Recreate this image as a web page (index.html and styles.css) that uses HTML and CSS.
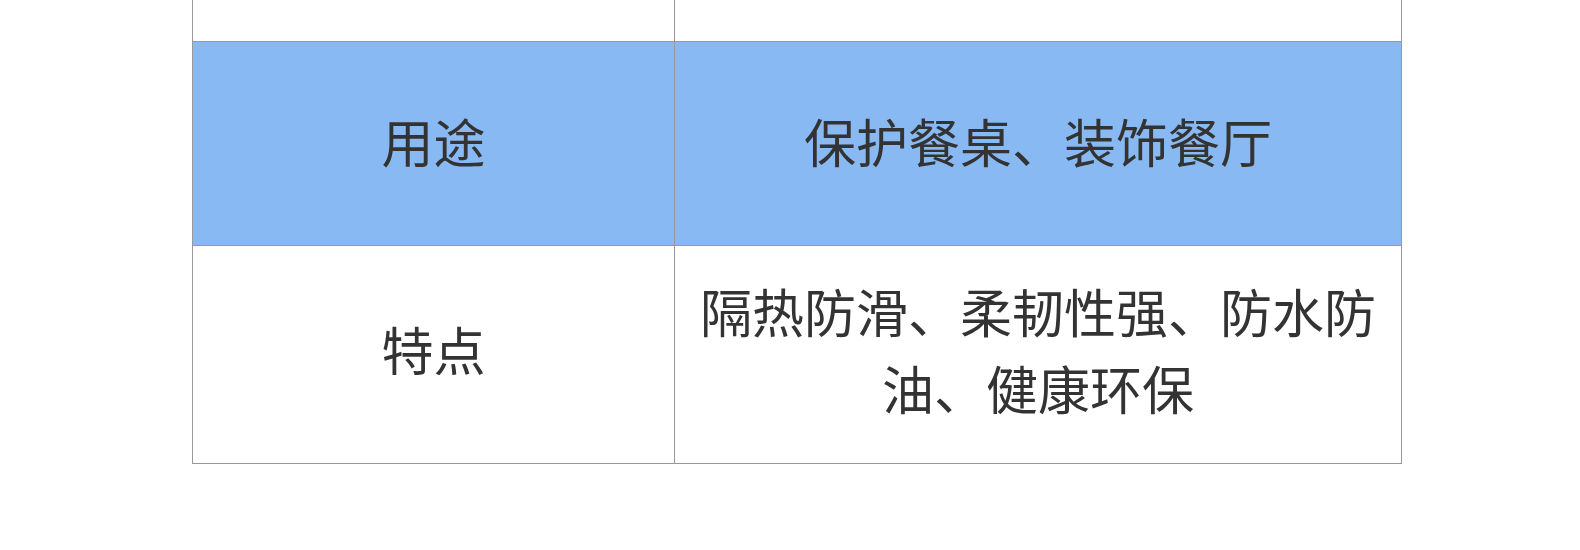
FILE: index.html
```html
<!DOCTYPE html>
<html lang="zh-CN">
<head>
<meta charset="utf-8">
<title>餐桌垫</title>
<link rel="stylesheet" href="styles.css">
</head>
<body>
<table class="spec">
  <colgroup>
    <col class="col-label">
    <col class="col-value">
  </colgroup>
  <tbody>
    <tr class="row-top">
      <td></td>
      <td></td>
    </tr>
    <tr class="row-use">
      <td>用途</td>
      <td>保护餐桌、装饰餐厅</td>
    </tr>
    <tr class="row-feature">
      <td>特点</td>
      <td>隔热防滑、柔韧性强、防水防油、健康环保</td>
    </tr>
  </tbody>
</table>
</body>
</html>
```

FILE: styles.css
```css
html, body {
  margin: 0;
  padding: 0;
  background: #ffffff;
}

body {
  width: 1580px;
  height: 550px;
  overflow: hidden;
  font-family: "Noto Sans CJK SC", "Noto Sans", sans-serif;
}

.spec {
  border-collapse: collapse;
  table-layout: fixed;
  width: 1209px;
  margin: -30px 0 0 192px;
  color: #333333;
  font-size: 52px;
  line-height: 76.5px;
}

.col-label {
  width: 482px;
}

.col-value {
  width: 727px;
}

.spec td {
  border: 1px solid #999999;
  text-align: center;
  vertical-align: middle;
  padding: 0 18px;
}

.row-top {
  height: 71px;
}

.row-use {
  height: 204px;
}

.row-use td {
  background: #89b9f2;
  padding-bottom: 4px;
}

.row-feature {
  height: 218px;
}

.row-feature td {
  padding-bottom: 10px;
}
```
